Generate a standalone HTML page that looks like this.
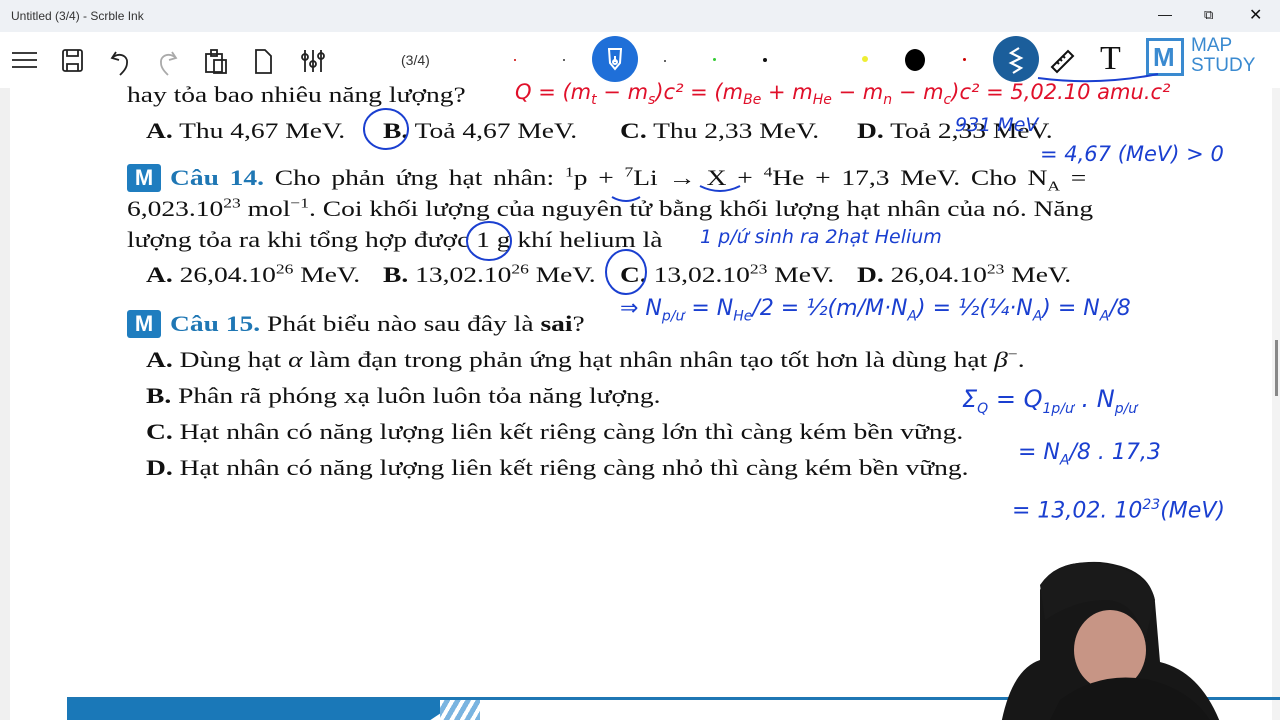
<!DOCTYPE html>
<html><head><meta charset="utf-8"><style>
*{margin:0;padding:0;box-sizing:border-box}
body{width:1280px;height:720px;overflow:hidden;background:#fff;font-family:"Liberation Serif",serif;position:relative;color:#111}
.tb{position:absolute;left:0;top:0;width:1280px;height:32px;background:#eef1f5;font-family:"Liberation Sans",sans-serif;font-size:12px}
.tool{position:absolute;left:0;top:32px;width:1280px;height:56px;background:#fff}
.t{position:absolute;white-space:nowrap;font-size:22px;transform:scaleX(1.25);transform-origin:0 0}
.b{font-weight:bold}
.q{color:#1f77b4;font-weight:bold}
.m{position:absolute;width:34px;height:28px;background:#1f7dbf;border-radius:3px;color:#fff;font:bold 22px "Liberation Sans",sans-serif;text-align:center;line-height:28px}
sup,sub{font-size:14px}
.h{position:absolute;font-family:"DejaVu Sans",sans-serif;font-style:italic;white-space:nowrap}
.blue{color:#1a3fd0}.red{color:#e0102a}
.dot{position:absolute;border-radius:50%}
</style></head><body>
<div class="tb"><span style="position:absolute;left:11px;top:9px;color:#333">Untitled (3/4) - Scrble Ink</span>
<span style="position:absolute;left:1158px;top:6px;font-size:14px">—</span>
<span style="position:absolute;left:1204px;top:7px;font-size:13px">⧉</span>
<span style="position:absolute;left:1249px;top:5px;font-size:16px">✕</span></div>
<div class="tool">
<svg width="340" height="56" style="position:absolute;left:0;top:0" fill="none" stroke="#222" stroke-width="1.8">
<path d="M12 21h25M12 28h25M12 35h25"/>
<rect x="63" y="18" width="19" height="21" rx="2"/><path d="M67 18v6h11v-6M67 39v-7h11v7"/>
<path d="M116 20l-4 6 7 2M112 26c6-6 16-3 15 5 0 5-4 9-7 12"/>
<path stroke="#aaa" d="M172 20l4 6-7 2M176 26c-6-6-16-3-15 5 0 5 4 9 7 12"/>
<rect x="206" y="22" width="16" height="18"/><rect x="211" y="18" width="6" height="6"/><rect x="214" y="28" width="12" height="13"/>
<path d="M256 18h9l6 6v17h-15z"/>
<path d="M305 18v22M313 18v22M321 18v22"/><circle cx="305" cy="25" r="3"/><circle cx="313" cy="32" r="3"/><circle cx="321" cy="24" r="3"/>
</svg>
<span style="position:absolute;left:401px;top:20px;font:14px 'Liberation Sans',sans-serif;color:#333">(3/4)</span>
<div class="dot" style="left:592px;top:4px;width:46px;height:46px;background:#1f6fd8"></div>
<svg width="46" height="46" style="position:absolute;left:592px;top:4px" fill="none" stroke="#fff" stroke-width="2"><path d="M16 13h14M17 13l1 14 5 6 5-6 1-14M23 20v6"/><circle cx="23" cy="26" r="2"/></svg>
<div class="dot" style="left:514px;top:27px;width:2px;height:2px;background:#c00"></div>
<div class="dot" style="left:563px;top:27px;width:2px;height:2px;background:#333"></div>
<div class="dot" style="left:664px;top:28px;width:2px;height:2px;background:#333"></div>
<div class="dot" style="left:713px;top:26px;width:3px;height:3px;background:#3c3"></div>
<div class="dot" style="left:763px;top:26px;width:4px;height:4px;background:#111"></div>
<div class="dot" style="left:862px;top:24px;width:6px;height:6px;background:#ee3"></div>
<div class="dot" style="left:905px;top:17px;width:20px;height:22px;background:#000"></div>
<div class="dot" style="left:963px;top:26px;width:3px;height:3px;background:#c00"></div>
<div class="dot" style="left:993px;top:4px;width:46px;height:46px;background:#1b5e9b"></div>
<svg width="46" height="46" style="position:absolute;left:993px;top:4px" fill="none" stroke="#fff" stroke-width="2.2"><path d="M26 12l-8 5 10 5-10 5 10 5-8 5"/></svg>
<svg width="30" height="30" style="position:absolute;left:1048px;top:13px" fill="none" stroke="#111" stroke-width="2"><path d="M4 22l16-16 5 5-16 16z M9 17l2 2M12 14l2 2M15 11l2 2"/></svg>
<span style="position:absolute;left:1100px;top:8px;font:34px 'Liberation Serif',serif">T</span>
<div style="position:absolute;left:1146px;top:6px;width:38px;height:38px;border:3px solid #3a8ad0"></div>
<span style="position:absolute;left:1153px;top:10px;font:bold 26px 'Liberation Sans',sans-serif;color:#3a8ad0">M</span>
<span style="position:absolute;left:1191px;top:4px;font:19px/20px 'Liberation Sans',sans-serif;color:#3a8ad0">MAP<br>STUDY</span>
</div>
<div style="position:absolute;left:0;top:88px;width:10px;height:632px;background:#f0f0f0"></div>
<div style="position:absolute;left:1272px;top:88px;width:8px;height:632px;background:#f3f3f3"></div>
<div style="position:absolute;left:1275px;top:340px;width:3px;height:56px;background:#888"></div>

<div class="t" style="left:127px;top:82px">hay tỏa bao nhiêu năng lượng?</div>
<div class="t" style="left:146px;top:118px"><span class="b">A.</span> Thu 4,67 MeV.</div>
<div class="t" style="left:383px;top:118px"><span class="b">B.</span> Toả 4,67 MeV.</div>
<div class="t" style="left:620px;top:118px"><span class="b">C.</span> Thu 2,33 MeV.</div>
<div class="t" style="left:857px;top:118px"><span class="b">D.</span> Toả 2,33 MeV.</div>
<div class="m" style="left:127px;top:164px">M</div>
<div class="t" style="left:170px;top:165px;display:inline-block;width:733px;text-align:justify;text-align-last:justify"><span class="q">Câu 14.</span> Cho phản ứng hạt nhân: <sup>1</sup>p + <sup>7</sup>Li → X + <sup>4</sup>He + 17,3 MeV. Cho N<sub>A</sub> =</div>
<div class="t" style="left:127px;top:196px">6,023.10<sup>23</sup> mol<sup>−1</sup>. Coi khối lượng của nguyên tử bằng khối lượng hạt nhân của nó. Năng</div>
<div class="t" style="left:127px;top:227px">lượng tỏa ra khi tổng hợp được 1 g khí helium là</div>
<div class="t" style="left:146px;top:262px"><span class="b">A.</span> 26,04.10<sup>26</sup> MeV.</div>
<div class="t" style="left:383px;top:262px"><span class="b">B.</span> 13,02.10<sup>26</sup> MeV.</div>
<div class="t" style="left:620px;top:262px"><span class="b">C.</span> 13,02.10<sup>23</sup> MeV.</div>
<div class="t" style="left:857px;top:262px"><span class="b">D.</span> 26,04.10<sup>23</sup> MeV.</div>
<div class="m" style="left:127px;top:310px">M</div>
<div class="t" style="left:170px;top:311px"><span class="q">Câu 15.</span> Phát biểu nào sau đây là <b>sai</b>?</div>
<div class="t" style="left:146px;top:347px"><span class="b">A.</span> Dùng hạt <i>α</i> làm đạn trong phản ứng hạt nhân nhân tạo tốt hơn là dùng hạt <i>β</i><sup>−</sup>.</div>
<div class="t" style="left:146px;top:383px"><span class="b">B.</span> Phân rã phóng xạ luôn luôn tỏa năng lượng.</div>
<div class="t" style="left:146px;top:419px"><span class="b">C.</span> Hạt nhân có năng lượng liên kết riêng càng lớn thì càng kém bền vững.</div>
<div class="t" style="left:146px;top:455px"><span class="b">D.</span> Hạt nhân có năng lượng liên kết riêng càng nhỏ thì càng kém bền vững.</div>

<div class="h red" style="left:515px;top:80px;font-size:21px">Q = (m<sub>t</sub> − m<sub>s</sub>)c² = (m<sub>Be</sub> + m<sub>He</sub> − m<sub>n</sub> − m<sub>c</sub>)c² = 5,02.10 amu.c²</div>
<div class="h blue" style="left:955px;top:114px;font-size:19px">931 MeV</div>
<div class="h blue" style="left:1040px;top:142px;font-size:21px">= 4,67 (MeV) &gt; 0</div>
<div class="h blue" style="left:700px;top:226px;font-size:19px">1 p/ứ  sinh ra 2hạt  Helium</div>
<div class="h blue" style="left:620px;top:296px;font-size:22px">⇒ N<sub>p/ư</sub> = N<sub>He</sub>/2 = ½(m/M·N<sub>A</sub>) = ½(¼·N<sub>A</sub>) = N<sub>A</sub>/8</div>
<div class="h blue" style="left:962px;top:385px;font-size:24px">Σ<sub>Q</sub> = Q<sub>1p/ư</sub> . N<sub>p/ư</sub></div>
<div class="h blue" style="left:1018px;top:440px;font-size:22px">= N<sub>A</sub>/8 . 17,3</div>
<div class="h blue" style="left:1012px;top:497px;font-size:22px">= 13,02. 10<sup>23</sup>(MeV)</div>
<svg width="1280" height="720" style="position:absolute;left:0;top:0" fill="none" stroke="#1a3fd0" stroke-width="2">
<ellipse cx="386" cy="129" rx="22" ry="20"/><ellipse cx="489" cy="241" rx="22" ry="19"/><ellipse cx="626" cy="272" rx="20" ry="22"/>
<path d="M612 197q14 8 28 0M700 186q20 10 40 0M1038 78q60 8 120-4"/>
</svg>

<div style="position:absolute;left:67px;top:697px;width:1213px;height:3px;background:#1f77b4"></div>
<div style="position:absolute;left:67px;top:699px;width:395px;height:21px;background:#1a78b8;clip-path:polygon(0 0,100% 0,92% 100%,0 100%)"></div>
<div style="position:absolute;left:440px;top:700px;width:40px;height:20px;background:repeating-linear-gradient(120deg,#fff 0 4px,#7ab4e0 4px 9px)"></div>
<svg width="280" height="190" style="position:absolute;left:1000px;top:530px">
<path d="M40 60q10-30 60-28q50 5 55 40l5 60q40 10 60 60v8H0q10-60 40-70z" fill="#171717"/>
<ellipse cx="110" cy="120" rx="36" ry="40" fill="#c79585"/>
<path d="M40 55q20-30 70-20q40 10 45 35l-10 40q-10-40-40-40q-30 0-60 20z" fill="#1a1a1a"/>
<path d="M60 170q40-30 90-20q40 10 60 40H50z" fill="#141414"/>
</svg>
</body></html>
